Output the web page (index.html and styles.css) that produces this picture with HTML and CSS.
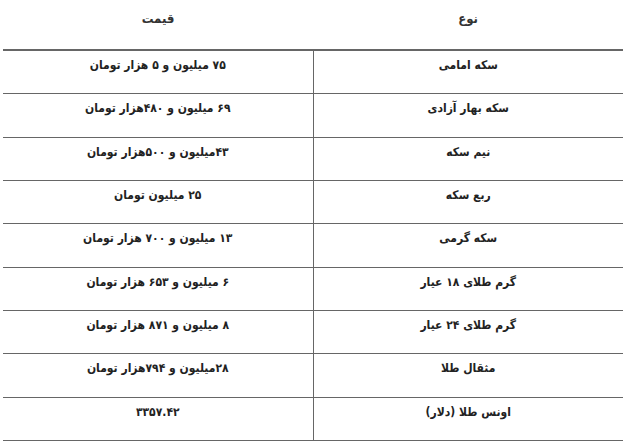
FILE: index.html
```html
<!DOCTYPE html>
<html lang="fa" dir="rtl">
<head>
<meta charset="utf-8">
<title>قیمت طلا و سکه</title>
<link rel="stylesheet" href="styles.css">
</head>
<body>
<table class="prices">
  <thead>
    <tr><th class="col-type">نوع</th><th class="col-price">قیمت</th></tr>
  </thead>
  <tbody>
    <tr><td>سکه امامی</td><td>۷۵ میلیون و ۵ هزار تومان</td></tr>
    <tr><td>سکه بهار آزادی</td><td>۶۹ میلیون و ۴۸۰هزار تومان</td></tr>
    <tr><td>نیم سکه</td><td>۴۳میلیون و ۵۰۰هزار تومان</td></tr>
    <tr><td>ربع سکه</td><td>۲۵ میلیون تومان</td></tr>
    <tr><td>سکه گرمی</td><td>۱۳ میلیون و ۷۰۰ هزار تومان</td></tr>
    <tr><td>گرم طلای ۱۸ عیار</td><td>۶ میلیون و ۶۵۳ هزار تومان</td></tr>
    <tr><td>گرم طلای ۲۴ عیار</td><td>۸ میلیون و ۸۷۱ هزار تومان</td></tr>
    <tr><td>مثقال طلا</td><td>۲۸میلیون و ۷۹۴هزار تومان</td></tr>
    <tr><td>اونس طلا (دلار)</td><td>۳۳۵۷.۴۲</td></tr>
  </tbody>
</table>
</body>
</html>
```
FILE: styles.css
```css
html, body {
  margin: 0;
  padding: 0;
  background: #ffffff;
}
body {
  padding: 0 5px 0 3px;
  font-family: "DejaVu Sans Condensed", "DejaVu Sans", sans-serif;
  color: #222222;
}
.prices {
  width: 620px;
  border-collapse: collapse;
  table-layout: fixed;
  direction: rtl;
}
.prices th,
.prices td {
  width: 50%;
  text-align: center;
  vertical-align: top;
  font-size: 12px;
  font-weight: bold;
  line-height: 18px;
  padding: 5px 8px 0 8px;
}
.prices thead th {
  height: 39px;
  padding-top: 10px;
  font-size: 13px;
  color: #333333;
  border-bottom: 2px solid #666666;
}
.prices tbody td {
  height: 37.33px;
  border-bottom: 1px solid #666666;
}
.prices tbody td:first-child {
  border-left: 1px solid #666666;
}
```
